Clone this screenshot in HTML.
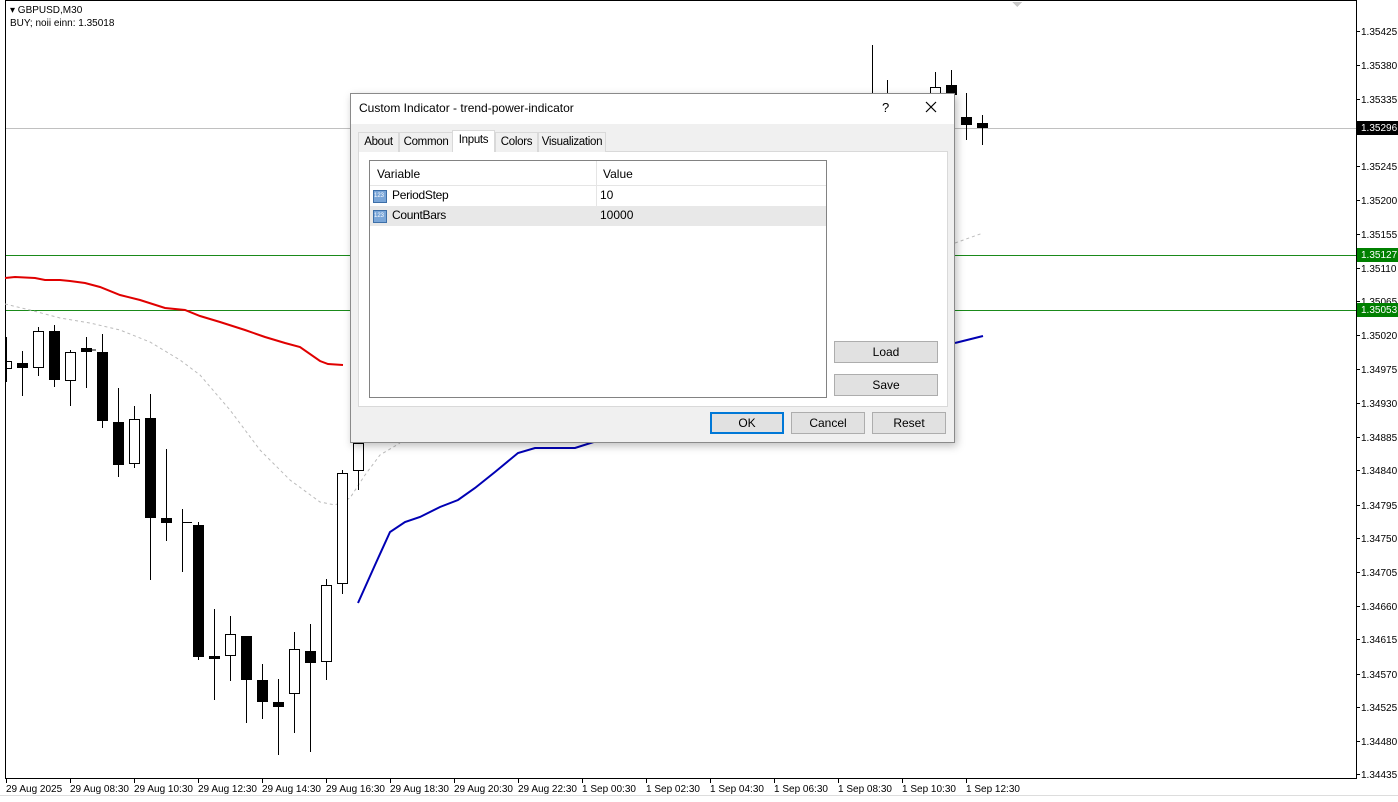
<!DOCTYPE html>
<html><head><meta charset="utf-8"><style>
*{margin:0;padding:0;box-sizing:border-box}
body{width:1398px;height:802px;background:#fff;position:relative;overflow:hidden;font-family:"Liberation Sans",sans-serif;font-size:11px;color:#000}
.ax{position:absolute;font-size:10px;white-space:nowrap}
.pr{margin-top:2px}
.dlg{position:absolute;left:350px;top:93px;width:605px;height:350px;background:#f0f0f0;border:1px solid #8a8a8a;box-shadow:2px 3px 8px rgba(0,0,0,.25)}
.ttl{position:absolute;left:0;top:0;width:603px;height:30px;background:#fff}
.tab{position:absolute;top:38px;height:20px;border:1px solid #d9d9d9;border-bottom:none;background:#f0f0f0;font-size:11.5px;padding-top:3px;text-align:center;letter-spacing:-0.3px}
.btn{position:absolute;height:22px;background:#e1e1e1;border:1px solid #adadad;font-size:12px;text-align:center;line-height:20px}
.abs{position:absolute}
</style></head><body>
<svg width="1398" height="802" style="position:absolute;left:0;top:0" shape-rendering="crispEdges">
<rect x="5.5" y="0.5" width="1351" height="778" fill="none" stroke="#000"/>
<line x1="0" y1="795.5" x2="1398" y2="795.5" stroke="#ddd"/>
<line x1="6" y1="128.5" x2="1356" y2="128.5" stroke="#c0c0c0"/>
<line x1="6" y1="255.5" x2="1356" y2="255.5" stroke="#1a8a1a"/>
<line x1="6" y1="310.5" x2="1356" y2="310.5" stroke="#1a8a1a"/>
<polygon points="1012,2 1022,2 1017,7" fill="#c8c8c8"/>
<g shape-rendering="auto" fill="none">
<polyline stroke="#bbb" stroke-dasharray="3,3" points="5,304 30,310 60,318 90,323 120,330 150,342 180,360 200,375 230,410 260,450 290,480 320,502 335,505 350,498 365,475 380,455 400,443"/>
<polyline stroke="#bbb" stroke-dasharray="3,3" points="955,243 983,233"/>
<polyline stroke="#e00000" stroke-width="2" points="5,278 15,277 35,278 45,280 60,280 70,281 85,283 100,287 120,295 140,300 165,308 185,310 200,316 220,322 245,330 265,337 285,343 300,347 320,361 328,364 343,365"/>
<polyline stroke="#0000b4" stroke-width="2" points="358,603 375,565 390,532 405,522 420,517 440,507 458,500 475,488 495,472 518,453 535,448 575,448 600,440"/>
<polyline stroke="#0000b4" stroke-width="2" points="955,343 983,336"/>
</g>
<g stroke="#000" stroke-width="1">
<path d="M6.5 337V382M22.5 351V396M38.5 327V376M54.5 325V387M70.5 350V406M86.5 337V388M102.5 334V428M118.5 388V477M134.5 406V468M150.5 394V580M166.5 449V541M182.5 509V572M198.5 522V660M214.5 609V700M230.5 616V681M246.5 636V723M262.5 664V719M278.5 679V755M294.5 632V733M310.5 624V752M326.5 579V680M342.5 470V594M358.5 443V490M872.5 45V93M887.5 80V93M935.5 72V93M951.5 70V118M966.5 93V140M982.5 115V145M182 522.5H192M214 657.5H220M86 350H96"/>
</g>
<g fill="#000">
<rect x="17" y="363" width="11" height="5"/><rect x="49" y="331" width="11" height="49"/><rect x="81" y="348" width="11" height="4"/><rect x="97" y="352" width="11" height="69"/><rect x="113" y="422" width="11" height="43"/><rect x="145" y="418" width="11" height="100"/><rect x="161" y="518" width="11" height="5"/><rect x="193" y="525" width="11" height="132"/><rect x="209" y="656" width="11" height="3"/><rect x="241" y="636" width="11" height="44"/><rect x="257" y="680" width="11" height="22"/><rect x="273" y="702" width="11" height="5"/><rect x="305" y="651" width="11" height="12"/><rect x="946" y="85" width="11" height="10"/><rect x="961" y="117" width="11" height="8"/><rect x="977" y="123" width="11" height="5"/>
</g>
<g fill="#fff" stroke="#000">
<rect x="6.5" y="361.5" width="5" height="7"/><rect x="33.5" y="331.5" width="10" height="36"/><rect x="65.5" y="352.5" width="10" height="28"/><rect x="129.5" y="419.5" width="10" height="44"/><rect x="225.5" y="634.5" width="10" height="21"/><rect x="289.5" y="649.5" width="10" height="44"/><rect x="321.5" y="585.5" width="10" height="76"/><rect x="337.5" y="473.5" width="10" height="110"/><rect x="353.5" y="443.5" width="10" height="27"/><rect x="930.5" y="87.5" width="10" height="6"/>
</g>
<g stroke="#000">
<path d="M1356 31.5h4M1356 65.5h4M1356 99.5h4M1356 133.5h4M1356 166.5h4M1356 200.5h4M1356 234.5h4M1356 268.5h4M1356 301.5h4M1356 335.5h4M1356 369.5h4M1356 403.5h4M1356 437.5h4M1356 470.5h4M1356 505.5h4M1356 538.5h4M1356 572.5h4M1356 606.5h4M1356 639.5h4M1356 674.5h4M1356 707.5h4M1356 741.5h4M1356 774.5h4"/>
<path d="M6.5 779v4M70.5 779v4M134.5 779v4M198.5 779v4M262.5 779v4M326.5 779v4M390.5 779v4M454.5 779v4M518.5 779v4M582.5 779v4M646.5 779v4M710.5 779v4M774.5 779v4M838.5 779v4M902.5 779v4M966.5 779v4"/>
</g>
<rect x="1357" y="121" width="41" height="14" fill="#000"/>
<rect x="1357" y="248" width="41" height="14" fill="#008000"/>
<rect x="1357" y="303" width="41" height="14" fill="#008000"/>
</svg>
<div class="ax" style="left:10px;top:5px">▾ GBPUSD,M30</div>
<div class="ax" style="left:10px;top:18px">BUY; noii einn: 1.35018</div>
<div class="ax pr" style="left:1361px;top:25px">1.35425</div><div class="ax pr" style="left:1361px;top:59px">1.35380</div><div class="ax pr" style="left:1361px;top:93px">1.35335</div>
<div class="ax" style="left:1361px;top:123px;color:#fff">1.35296</div>
<div class="ax pr" style="left:1361px;top:160px">1.35245</div><div class="ax pr" style="left:1361px;top:194px">1.35200</div><div class="ax pr" style="left:1361px;top:228px">1.35155</div>
<div class="ax" style="left:1361px;top:250px;color:#fff">1.35127</div>
<div class="ax pr" style="left:1361px;top:262px">1.35110</div><div class="ax pr" style="left:1361px;top:295px">1.35065</div>
<div class="ax" style="left:1358px;top:303px;height:14px;width:40px;padding-left:3px;padding-top:2px;color:#fff;background:#008000">1.35053</div>
<div class="ax pr" style="left:1361px;top:329px">1.35020</div><div class="ax pr" style="left:1361px;top:363px">1.34975</div><div class="ax pr" style="left:1361px;top:397px">1.34930</div><div class="ax pr" style="left:1361px;top:431px">1.34885</div><div class="ax pr" style="left:1361px;top:464px">1.34840</div><div class="ax pr" style="left:1361px;top:499px">1.34795</div><div class="ax pr" style="left:1361px;top:532px">1.34750</div><div class="ax pr" style="left:1361px;top:566px">1.34705</div><div class="ax pr" style="left:1361px;top:600px">1.34660</div><div class="ax pr" style="left:1361px;top:633px">1.34615</div><div class="ax pr" style="left:1361px;top:668px">1.34570</div><div class="ax pr" style="left:1361px;top:701px">1.34525</div><div class="ax pr" style="left:1361px;top:735px">1.34480</div><div class="ax pr" style="left:1361px;top:768px">1.34435</div>
<div class="ax" style="left:6px;top:784px">29 Aug 2025</div><div class="ax" style="left:70px;top:784px">29 Aug 08:30</div><div class="ax" style="left:134px;top:784px">29 Aug 10:30</div><div class="ax" style="left:198px;top:784px">29 Aug 12:30</div><div class="ax" style="left:262px;top:784px">29 Aug 14:30</div><div class="ax" style="left:326px;top:784px">29 Aug 16:30</div><div class="ax" style="left:390px;top:784px">29 Aug 18:30</div><div class="ax" style="left:454px;top:784px">29 Aug 20:30</div><div class="ax" style="left:518px;top:784px">29 Aug 22:30</div><div class="ax" style="left:582px;top:784px">1 Sep 00:30</div><div class="ax" style="left:646px;top:784px">1 Sep 02:30</div><div class="ax" style="left:710px;top:784px">1 Sep 04:30</div><div class="ax" style="left:774px;top:784px">1 Sep 06:30</div><div class="ax" style="left:838px;top:784px">1 Sep 08:30</div><div class="ax" style="left:902px;top:784px">1 Sep 10:30</div><div class="ax" style="left:966px;top:784px">1 Sep 12:30</div>

<div class="dlg">
<div class="ttl"></div>
<div class="abs" style="left:8px;top:7px;font-size:12px">Custom Indicator - trend-power-indicator</div>
<div class="abs" style="left:531px;top:6px;font-size:13px">?</div>
<svg class="abs" style="left:574px;top:7px" width="12" height="12"><path d="M1 1L11 11M11 1L1 11" stroke="#000" stroke-width="1.2"/></svg>
<div class="abs" style="left:7px;top:57px;width:590px;height:256px;background:#fff;border:1px solid #d9d9d9"></div>
<div class="tab" style="left:7px;width:41px">About</div>
<div class="tab" style="left:48px;width:54px">Common</div>
<div class="tab" style="left:101px;width:43px;top:36px;height:22px;background:#fff;z-index:2">Inputs</div>
<div class="tab" style="left:144px;width:43px">Colors</div>
<div class="tab" style="left:187px;width:68px">Visualization</div>
<div class="abs" style="left:18px;top:66px;width:458px;height:238px;background:#fff;border:1px solid #828282">
 <div class="abs" style="left:0;top:0;width:456px;height:25px;border-bottom:1px solid #e5e5e5"></div>
 <div class="abs" style="left:226px;top:0;width:1px;height:64px;background:#e5e5e5"></div>
 <div class="abs" style="left:7px;top:6px;font-size:12px">Variable</div>
 <div class="abs" style="left:233px;top:6px;font-size:12px">Value</div>
 <div class="abs" style="left:0;top:45px;width:456px;height:20px;background:#e8e8e8"></div>
 <div class="abs" style="left:3px;top:29px;width:14px;height:13px;background:#7aa6d8;border:1px solid #3d6fa8;font-size:6px;color:#fff;line-height:11px">123</div>
 <div class="abs" style="left:3px;top:49px;width:14px;height:13px;background:#7aa6d8;border:1px solid #3d6fa8;font-size:6px;color:#fff;line-height:11px">123</div>
 <div class="abs" style="left:22px;top:27px;font-size:12px;letter-spacing:-0.3px">PeriodStep</div>
 <div class="abs" style="left:230px;top:27px;font-size:12px">10</div>
 <div class="abs" style="left:22px;top:47px;font-size:12px;letter-spacing:-0.3px">CountBars</div>
 <div class="abs" style="left:230px;top:47px;font-size:12px">10000</div>
</div>
<div class="btn" style="left:483px;top:247px;width:104px">Load</div>
<div class="btn" style="left:483px;top:280px;width:104px">Save</div>
<div class="btn" style="left:359px;top:318px;width:74px;border:2px solid #0078d7;line-height:18px">OK</div>
<div class="btn" style="left:440px;top:318px;width:74px">Cancel</div>
<div class="btn" style="left:521px;top:318px;width:74px">Reset</div>
</div>
</body></html>
